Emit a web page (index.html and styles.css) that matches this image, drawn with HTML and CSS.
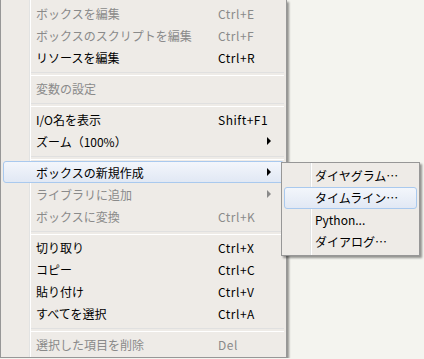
FILE: index.html
```html
<!DOCTYPE html>
<html lang="ja">
<head>
    <meta charset="UTF-8">
    <title>メニュー</title>
    <link rel="stylesheet" href="styles.css">
</head>
<body>
    <ul class="menu main">
        <li class="item disabled"><span class="label">ボックスを編集</span><span class="key">Ctrl+E</span></li>
        <li class="item disabled"><span class="label">ボックスのスクリプトを編集</span><span class="key">Ctrl+F</span></li>
        <li class="item"><span class="label">リソースを編集</span><span class="key">Ctrl+R</span></li>
        <li class="sep"></li>
        <li class="item disabled"><span class="label">変数の設定</span></li>
        <li class="sep"></li>
        <li class="item"><span class="label">I/O名を表示</span><span class="key">Shift+F1</span></li>
        <li class="item"><span class="label">ズーム（100%）</span><span class="key"></span><span class="arrow"></span></li>
        <li class="sep"></li>
        <li class="item hover open">
            <span class="label">ボックスの新規作成</span><span class="key"></span><span class="arrow"></span>
            <!-- サブメニュー -->
            <ul class="menu sub">
                <li class="item"><span class="label">ダイヤグラム…</span></li>
                <li class="item hover"><span class="label">タイムライン…</span></li>
                <li class="item"><span class="label">Python...</span></li>
                <li class="item"><span class="label">ダイアログ…</span></li>
            </ul>
        </li>
        <li class="item disabled"><span class="label">ライブラリに追加</span><span class="key"></span><span class="arrow"></span></li>
        <li class="item disabled"><span class="label">ボックスに変換</span><span class="key">Ctrl+K</span></li>
        <li class="sep"></li>
        <li class="item"><span class="label">切り取り</span><span class="key">Ctrl+X</span></li>
        <li class="item"><span class="label">コピー</span><span class="key">Ctrl+C</span></li>
        <li class="item"><span class="label">貼り付け</span><span class="key">Ctrl+V</span></li>
        <li class="item"><span class="label">すべてを選択</span><span class="key">Ctrl+A</span></li>
        <li class="sep"></li>
        <li class="item disabled"><span class="label">選択した項目を削除</span><span class="key">Del</span></li>
    </ul>
</body>
</html>
```

FILE: styles.css
```css
* {
    margin: 0;
    padding: 0;
    box-sizing: border-box;
}

body {
    background: #f4f4ef;
    font-family: "Noto Sans CJK JP", "Noto Sans", sans-serif;
    font-size: 12px;
    color: #000;
}

ul {
    list-style: none;
}

.menu {
    background:
        linear-gradient(to right, transparent 28px, #e2e3e3 28px, #e2e3e3 29px, #fff 29px, #fff 30px, transparent 30px),
        #eeebe7;
    border: 1px solid #979797;
    padding: 2px;
    box-shadow: 2px 2px 2px rgba(0, 0, 0, 0.4);
}

.main {
    width: 287px;
    border-top: none;
}

.item {
    display: grid;
    grid-template-columns: 182px 1fr 16px;
    align-items: center;
    height: 22px;
    padding-left: 32px;
    border: 1px solid transparent;
    border-radius: 3px;
    white-space: nowrap;
}

.item.disabled {
    color: #8a8a8a;
}

.item.hover {
    border-color: #a9c9ee;
    background: linear-gradient(#f3f6fb, #e1e8f4);
}

.key {
    letter-spacing: 0.5px;
}

.open {
    position: relative;
}

.arrow {
    width: 0;
    height: 0;
    border-top: 4px solid transparent;
    border-bottom: 4px solid transparent;
    border-left: 4px solid #000;
}

.disabled .arrow {
    border-left-color: #8a8a8a;
}

.sep {
    height: 9px;
    margin-left: 28px;
    padding-top: 4px;
}

.sep::before {
    content: "";
    display: block;
    height: 2px;
    border-top: 1px solid #e0e0e0;
    border-bottom: 1px solid #fff;
}

.sub {
    position: absolute;
    left: 277px;
    top: 0;
    width: 139px;
    color: #000;
}

.sub .item {
    display: block;
    line-height: 20px;
    padding-left: 30px;
}
```
